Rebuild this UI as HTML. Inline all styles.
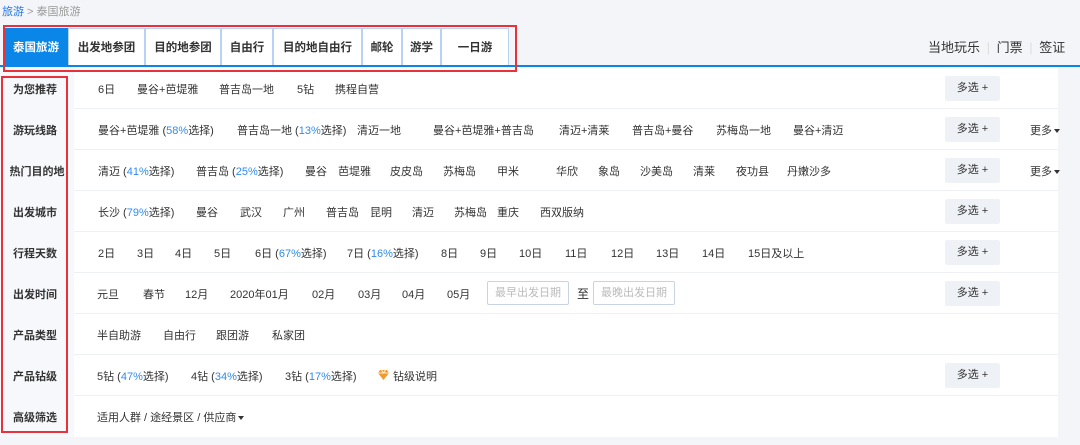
<!DOCTYPE html>
<html><head><meta charset="utf-8"><style>
*{margin:0;padding:0;box-sizing:border-box}
body{width:1080px;height:445px;background:#f3f5f8;font-family:"Liberation Sans","Noto Sans CJK SC",sans-serif;font-size:11px;color:#333;position:relative;overflow:hidden}
.a{position:absolute;white-space:nowrap}
.crumb{left:2px;top:3px;color:#999;font-size:11px}
.crumb b{font-weight:normal;color:#2577e3}
.tab{position:absolute;top:28px;height:38px;line-height:38px;text-align:center;background:#fff;border:1px solid #b7d2f5;border-bottom:none;font-size:11.5px;font-weight:bold;color:#333}
.tab.on{background:#0a86e8;color:#fff;border-color:#0a86e8}
.bline{position:absolute;left:0;top:65px;width:1080px;height:2px;background:#0a86e8}
.panel{position:absolute;left:0;top:67px;width:1058px;height:370px;background:#fff}
.lab{position:absolute;left:0;top:67px;width:74px;height:370px;background:#f6f8fb}
.row{position:absolute;left:74px;width:984px;height:1px;background:#eef0f3}
.l{font-weight:bold;color:#333;width:74px;text-align:center;left:-2px}
.i{color:#333}
.p{color:#2f8bf0}
.btn{position:absolute;left:945px;width:55px;height:25px;background:#eef1f5;border-radius:2px;text-align:center;line-height:25px;color:#333}
.more{left:1030px}
.inp{position:absolute;width:82px;height:24px;border:1px solid #c9d3e2;border-radius:2px;color:#bbb;text-align:center;line-height:22px}
.red{position:absolute;border:2px solid #e8313a}
.tri{display:inline-block;width:0;height:0;border-left:3.5px solid transparent;border-right:3.5px solid transparent;border-top:4px solid #333;vertical-align:middle;margin-left:2px}
</style></head><body>
<div class="a crumb"><b>旅游</b> &gt; 泰国旅游</div>
<div class="tab on" style="left:4px;width:64px">泰国旅游</div>
<div class="tab" style="left:68px;width:77px">出发地参团</div>
<div class="tab" style="left:145px;width:76px">目的地参团</div>
<div class="tab" style="left:221px;width:52px">自由行</div>
<div class="tab" style="left:273px;width:89px">目的地自由行</div>
<div class="tab" style="left:362px;width:40px">邮轮</div>
<div class="tab" style="left:402px;width:39px">游学</div>
<div class="tab" style="left:441px;width:68px">一日游</div>
<div class="a" style="left:928px;top:37px;font-size:13px;color:#333">当地玩乐 <span style="color:#ddd;margin:0 3px">|</span> 门票 <span style="color:#ddd;margin:0 3px">|</span> 签证</div>
<div class="bline"></div>
<div class="panel"></div>
<div class="lab"></div>
<div class="row" style="top:108px"></div><div class="row" style="top:149px"></div><div class="row" style="top:190px"></div><div class="row" style="top:231px"></div><div class="row" style="top:272px"></div><div class="row" style="top:313px"></div><div class="row" style="top:354px"></div><div class="row" style="top:395px"></div>

<div class="a l" style="top:81px">为您推荐</div>
<div class="a l" style="top:122px">游玩线路</div>
<div class="a l" style="top:163px;left:0">热门目的地</div>
<div class="a l" style="top:204px">出发城市</div>
<div class="a l" style="top:245px">行程天数</div>
<div class="a l" style="top:286px">出发时间</div>
<div class="a l" style="top:327px">产品类型</div>
<div class="a l" style="top:368px">产品钻级</div>
<div class="a l" style="top:409px">高级筛选</div>

<div class="a i" style="top:81px;left:98px">6日</div>
<div class="a i" style="top:81px;left:137px">曼谷+芭堤雅</div>
<div class="a i" style="top:81px;left:219px">普吉岛一地</div>
<div class="a i" style="top:81px;left:297px">5钻</div>
<div class="a i" style="top:81px;left:335px">携程自营</div>

<div class="a i" style="top:122px;left:98px">曼谷+芭堤雅 (<span class="p">58%</span>选择)</div>
<div class="a i" style="top:122px;left:237px">普吉岛一地 (<span class="p">13%</span>选择)</div>
<div class="a i" style="top:122px;left:357px">清迈一地</div>
<div class="a i" style="top:122px;left:433px">曼谷+芭堤雅+普吉岛</div>
<div class="a i" style="top:122px;left:559px">清迈+清莱</div>
<div class="a i" style="top:122px;left:632px">普吉岛+曼谷</div>
<div class="a i" style="top:122px;left:716px">苏梅岛一地</div>
<div class="a i" style="top:122px;left:793px">曼谷+清迈</div>

<div class="a i" style="top:163px;left:98px">清迈 (<span class="p">41%</span>选择)</div>
<div class="a i" style="top:163px;left:196px">普吉岛 (<span class="p">25%</span>选择)</div>
<div class="a i" style="top:163px;left:305px">曼谷</div>
<div class="a i" style="top:163px;left:338px">芭堤雅</div>
<div class="a i" style="top:163px;left:390px">皮皮岛</div>
<div class="a i" style="top:163px;left:443px">苏梅岛</div>
<div class="a i" style="top:163px;left:497px">甲米</div>
<div class="a i" style="top:163px;left:556px">华欣</div>
<div class="a i" style="top:163px;left:598px">象岛</div>
<div class="a i" style="top:163px;left:640px">沙美岛</div>
<div class="a i" style="top:163px;left:693px">清莱</div>
<div class="a i" style="top:163px;left:736px">夜功县</div>
<div class="a i" style="top:163px;left:787px">丹嫩沙多</div>

<div class="a i" style="top:204px;left:98px">长沙 (<span class="p">79%</span>选择)</div>
<div class="a i" style="top:204px;left:196px">曼谷</div>
<div class="a i" style="top:204px;left:240px">武汉</div>
<div class="a i" style="top:204px;left:283px">广州</div>
<div class="a i" style="top:204px;left:326px">普吉岛</div>
<div class="a i" style="top:204px;left:370px">昆明</div>
<div class="a i" style="top:204px;left:412px">清迈</div>
<div class="a i" style="top:204px;left:454px">苏梅岛</div>
<div class="a i" style="top:204px;left:497px">重庆</div>
<div class="a i" style="top:204px;left:540px">西双版纳</div>

<div class="a i" style="top:245px;left:98px">2日</div>
<div class="a i" style="top:245px;left:137px">3日</div>
<div class="a i" style="top:245px;left:175px">4日</div>
<div class="a i" style="top:245px;left:214px">5日</div>
<div class="a i" style="top:245px;left:255px">6日 (<span class="p">67%</span>选择)</div>
<div class="a i" style="top:245px;left:347px">7日 (<span class="p">16%</span>选择)</div>
<div class="a i" style="top:245px;left:441px">8日</div>
<div class="a i" style="top:245px;left:480px">9日</div>
<div class="a i" style="top:245px;left:519px">10日</div>
<div class="a i" style="top:245px;left:565px">11日</div>
<div class="a i" style="top:245px;left:611px">12日</div>
<div class="a i" style="top:245px;left:656px">13日</div>
<div class="a i" style="top:245px;left:702px">14日</div>
<div class="a i" style="top:245px;left:748px">15日及以上</div>

<div class="a i" style="top:286px;left:97px">元旦</div>
<div class="a i" style="top:286px;left:143px">春节</div>
<div class="a i" style="top:286px;left:185px">12月</div>
<div class="a i" style="top:286px;left:230px">2020年01月</div>
<div class="a i" style="top:286px;left:312px">02月</div>
<div class="a i" style="top:286px;left:358px">03月</div>
<div class="a i" style="top:286px;left:402px">04月</div>
<div class="a i" style="top:286px;left:447px">05月</div>
<div class="inp" style="left:487px;top:281px">最早出发日期</div>
<div class="a i" style="top:285px;left:577px;font-size:12px">至</div>
<div class="inp" style="left:593px;top:281px">最晚出发日期</div>

<div class="a i" style="top:327px;left:97px">半自助游</div>
<div class="a i" style="top:327px;left:163px">自由行</div>
<div class="a i" style="top:327px;left:216px">跟团游</div>
<div class="a i" style="top:327px;left:272px">私家团</div>

<div class="a i" style="top:368px;left:97px">5钻 (<span class="p">47%</span>选择)</div>
<div class="a i" style="top:368px;left:191px">4钻 (<span class="p">34%</span>选择)</div>
<div class="a i" style="top:368px;left:285px">3钻 (<span class="p">17%</span>选择)</div>
<svg class="a" style="left:378px;top:370px" width="11" height="10" viewBox="0 0 11 10"><path d="M2 0H9L11 3L5.5 10L0 3Z" fill="#f39a2c"/><path d="M0 3H11M3.5 0L5.5 3L7.5 0" stroke="#fff" stroke-width="0.8" fill="none"/></svg>
<div class="a i" style="top:368px;left:393px">钻级说明</div>

<div class="a i" style="top:409px;left:97px">适用人群 / 途经景区 / 供应商<span class="tri"></span></div>

<div class="btn" style="top:76px">多选 +</div>
<div class="btn" style="top:117px">多选 +</div>
<div class="btn" style="top:158px">多选 +</div>
<div class="btn" style="top:199px">多选 +</div>
<div class="btn" style="top:240px">多选 +</div>
<div class="btn" style="top:281px">多选 +</div>
<div class="btn" style="top:363px">多选 +</div>
<div class="a more" style="top:122px">更多<span class="tri"></span></div>
<div class="a more" style="top:163px">更多<span class="tri"></span></div>

<div class="red" style="left:3px;top:25px;width:514px;height:47px"></div>
<div class="red" style="left:1px;top:76px;width:67px;height:357px"></div>
</body></html>
